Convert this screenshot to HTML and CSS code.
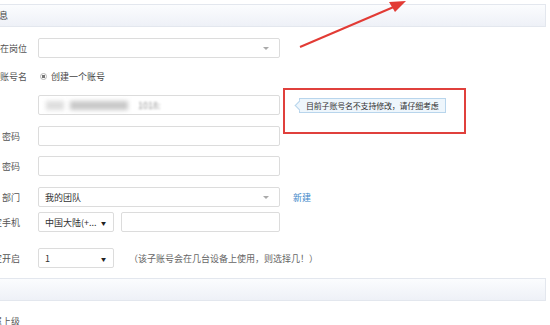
FILE: index.html
```html
<!DOCTYPE html>
<html lang="zh-CN">
<head>
    <meta charset="UTF-8">
    <title>子账号设置</title>
    <link rel="stylesheet" href="styles.css">
</head>
<body>
    <div class="page">
        <div class="section-bar">基本信息</div>

        <div class="row row-first">
            <label class="label">所在岗位</label>
            <div class="select wide"><span></span><i class="caret"></i></div>
        </div>

        <div class="row row-radio">
            <label class="label">子账号名</label>
            <span class="radio"></span>
            <span class="radio-text">创建一个账号</span>
        </div>

        <div class="row row-account">
            <label class="label"></label>
            <div class="input wide blurred">
                <span class="blur blur-a"></span>
                <span class="blur blur-b"></span>
                <span class="blur-text">1018:</span>
            </div>
            <div class="tip">目前子账号名不支持修改，请仔细考虑</div>
        </div>

        <div class="row row-pwd">
            <label class="label short">&nbsp;密码</label>
            <div class="input wide"></div>
        </div>

        <div class="row row-pwd2">
            <label class="label short">&nbsp;密码</label>
            <div class="input wide"></div>
        </div>

        <div class="row row-dept">
            <label class="label short">&nbsp;部门</label>
            <div class="select wide"><span>我的团队</span><i class="caret"></i></div>
            <a class="link" href="#">新建</a>
        </div>

        <div class="row row-phone">
            <label class="label short">绑定手机</label>
            <div class="select small"><span>中国大陆(+...</span><b class="caret-dark">▼</b></div>
            <div class="input phone"></div>
        </div>

        <div class="row row-device">
            <label class="label short">设定开启</label>
            <div class="select small"><span>1</span><b class="caret-dark">▼</b></div>
            <span class="note">（该子账号会在几台设备上使用，则选择几！）</span>
        </div>

        <div class="section-bar section-second"></div>

        <div class="row row-parent">
            <label class="label short">所属上级</label>
        </div>
    </div>

    <!-- annotation drawn on top of the screenshot -->
    <div class="mark-box"></div>
    <svg class="mark-arrow" width="550" height="60" viewBox="0 0 550 60">
        <line x1="300" y1="47" x2="396" y2="6" stroke="#e23b35" stroke-width="2"/>
        <polygon points="406,1 389,2 395,12" fill="#e23b35"/>
    </svg>
</body>
</html>
```

FILE: styles.css
```css
body {
    margin: 0;
    background: #fff;
    font-family: "Noto Sans CJK SC", "Noto Sans", sans-serif;
    font-size: 9px;
    color: #333;
    overflow: hidden;
}

.page {
    margin-left: -34px;
    width: 580px;
    padding-top: 4px;
}

.section-bar {
    height: 21px;
    line-height: 21px;
    padding-left: 5px;
    border: 1px solid #e3e7ee;
    background: linear-gradient(#fbfcfe, #eef1f7);
    color: #444;
}
.section-second {
    margin-top: 10px;
}

.row {
    display: flex;
    align-items: center;
    height: 20px;
}
.row-first { margin-top: 11px; }
.row-radio { margin-top: 8px; }
.row-account { margin-top: 9px; }
.row-pwd { margin-top: 11px; }
.row-pwd2 { margin-top: 10px; }
.row-dept { margin-top: 11px; }
.row-phone { margin-top: 5px; }
.row-device { margin-top: 16px; }
.row-parent { margin-top: 10px; }

.label {
    box-sizing: border-box;
    width: 61px;
    margin-right: 11px;
    text-align: right;
    color: #555;
    white-space: nowrap;
    flex: none;
}
.label.short {
    padding-right: 7px;
}

.input,
.select {
    box-sizing: border-box;
    height: 20px;
    border: 1px solid #dcdcdc;
    border-radius: 2px;
    background: #fff;
    flex: none;
}
.wide { width: 242px; }
.small { width: 76px; }
.phone { width: 159px; margin-left: 7px; }

.select {
    display: flex;
    align-items: center;
    justify-content: space-between;
    padding: 0 7px 0 6px;
    color: #333;
}
.caret {
    width: 0;
    height: 0;
    border-left: 3px solid transparent;
    border-right: 3px solid transparent;
    border-top: 3px solid #aaa;
    margin-right: 3px;
}
.caret-dark {
    font-size: 5px;
    color: #222;
    font-weight: normal;
}

.radio {
    box-sizing: border-box;
    width: 7px;
    height: 7px;
    border-radius: 50%;
    border: 1px solid #b5b5b5;
    background: radial-gradient(#777 0 1.6px, #fff 2px);
    margin: 0 4px 0 2px;
}
.radio-text { color: #444; }

.blurred {
    display: flex;
    align-items: center;
    padding-left: 7px;
}
.blur {
    height: 9px;
    background: #c9c9c9;
    filter: blur(2px);
}
.blur-a { width: 18px; background: #dedede; }
.blur-b { width: 58px; margin-left: 6px; }
.blur-text {
    margin-left: 10px;
    color: #999;
    filter: blur(0.8px);
}

.tip {
    position: relative;
    margin-left: 19px;
    height: 13px;
    line-height: 13px;
    padding: 0 6px;
    border: 1px solid #b8d5ec;
    background: #eef6fc;
    font-size: 8px;
    letter-spacing: -0.2px;
    color: #333;
    white-space: nowrap;
}
.tip::before {
    content: "";
    position: absolute;
    left: -4px;
    top: 3px;
    width: 6px;
    height: 6px;
    background: #eef6fc;
    border-left: 1px solid #b8d5ec;
    border-bottom: 1px solid #b8d5ec;
    transform: rotate(45deg);
}

.link {
    margin-left: 13px;
    color: #3b87c9;
    text-decoration: none;
}

.note {
    margin-left: 15px;
    color: #666;
}

.mark-box {
    position: absolute;
    left: 283px;
    top: 88px;
    width: 179px;
    height: 42px;
    border: 2px solid #e0403c;
}
.mark-arrow {
    position: absolute;
    left: 0;
    top: 0;
}
```
